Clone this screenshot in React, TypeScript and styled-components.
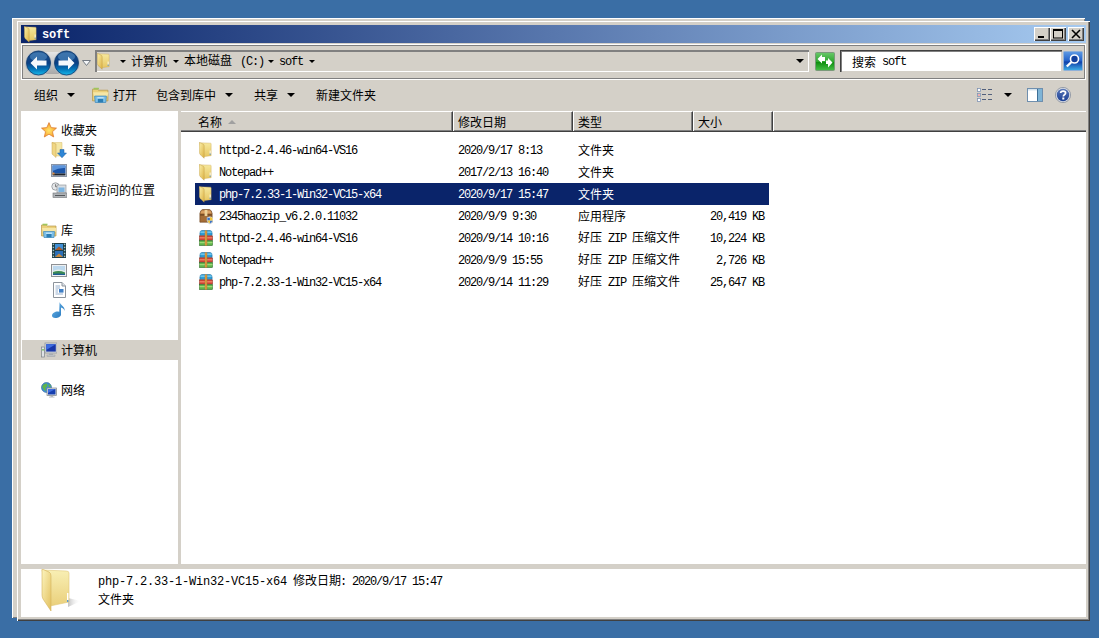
import React from "react";
import styled, { createGlobalStyle } from "styled-components";

const Global = createGlobalStyle`
  html, body { margin: 0; padding: 0; background: #3a6ea5; }
  body { font-family: "Noto Sans CJK SC", "Liberation Sans", sans-serif; font-size: 12px; color: #000; }
  * { box-sizing: border-box; }
`;

const Desktop = styled.div`position: relative; width: 1099px; height: 638px; overflow: hidden; background: #3a6ea5;`;
const BackWindow = styled.div`
  position: absolute; left: 12px; top: 18px; width: 1073px; height: 600px; background: #d4d0c8;
  box-shadow: inset 1px 1px 0 #fff, inset -1px -1px 0 #808080;
`;
const Window = styled.div`
  position: absolute; left: 17px; top: 21px; width: 1073px; height: 600px; padding: 4px;
  display: flex; flex-direction: column; background: #d4d0c8;
  box-shadow: inset 1px 1px 0 #fff, inset -1px -1px 0 #404040, inset -2px -2px 0 #808080;
`;
const Lat = styled.span`font-family: "Liberation Mono", monospace; font-size: 12px; letter-spacing: -1.2px; white-space: pre;`;
const StatusName = styled(Lat)`letter-spacing: -.2px; margin-right: -1px;`;
const StatusDate = styled(Lat)`margin-left: -1px;`;
const FileName = styled(Lat)`padding-top: 2px;`;

const TitleBar = styled.div`
  height: 18px; margin-bottom: 1px; flex: none; display: flex; align-items: center; padding: 0 3px;
  background: linear-gradient(90deg, #0a246a, #a6caf0);
`;
const TitleText = styled.span`
  margin-left: 4px; padding-top: 1px; color: #fff; font-family: "Liberation Mono", monospace; font-weight: 700; font-size: 12px; letter-spacing: -.2px;
`;
const CaptionGroup = styled.div`margin-left: auto; margin-right: -1px; display: flex; align-items: center;`;
const CaptionButton = styled.div<{ $gap?: number }>`
  width: 16px; height: 14px; margin-left: ${p => p.$gap ?? 0}px; background: #d4d0c8; display: flex; align-items: center; justify-content: center;
  box-shadow: inset 1px 1px 0 #fff, inset -1px -1px 0 #404040, inset -2px -2px 0 #808080;
`;

const NavBar = styled.div`
  height: 36px; flex: none; display: flex; align-items: center; padding: 0 2px 2px 3px; 
  box-shadow: inset 1px 1px 0 #fff, inset -1px -1px 0 #fff, inset -2px -2px 0 #808080, inset 2px 2px 0 #808080;
`;
const NavButtons = styled.svg`flex: none; margin-top: 4px;`;
const AddressBox = styled.div`
  width: 714px; height: 22px; flex: none; display: flex; align-items: center; padding-left: 2px; padding-right: 5px;
  box-shadow: inset 1px 1px 0 #808080, inset 2px 2px 0 #808080, inset -1px -1px 0 #fff;
`;
const SmallCaret = styled.i<{ $left?: number }>`
  display: block; flex: none; margin-left: ${p => p.$left ?? 0}px; width: 0; height: 0;
  border-left: 3px solid transparent; border-right: 3px solid transparent; border-top: 3px solid #000;
`;
const Crumb = styled.span`margin-left: 5px; white-space: nowrap; line-height: 20px;`;
const Drive = styled(Lat)`margin: 0 -2px 0 8px;`;
const AddressDrop = styled(SmallCaret)`
  margin-left: auto; border-left-width: 4px; border-right-width: 4px; border-top-width: 4px;
`;
const GreenButton = styled.svg`flex: none; margin-left: 6px;`;
const SearchBox = styled.div`
  width: 222px; height: 22px; margin-left: 5px; flex: none; background: #fff; padding: 1px 0 0 12px; display: flex; align-items: center; gap: 6px; line-height: 20px;
  box-shadow: inset 1px 1px 0 #404040, inset 2px 2px 0 #808080, inset -1px -1px 0 #d4d0c8;
`;
const SearchButton = styled.svg`flex: none; margin-left: 1px;`;

const Toolbar = styled.div`height: 31px; flex: none; display: flex; align-items: center; padding: 0 15px 1px 13px;`;
const ToolItem = styled.div<{ $left?: number }>`
  display: flex; align-items: center; gap: 9px; margin-left: ${p => p.$left ?? 0}px; white-space: nowrap; line-height: 18px;
`;
const OpenLabel = styled.span`margin-left: -5px;`;
const ToolCaret = styled.i`
  display: block; flex: none; width: 0; height: 0;
  border-left: 4px solid transparent; border-right: 4px solid transparent; border-top: 4px solid #000;
`;
const ToolRight = styled.div`margin-left: auto; display: flex; align-items: center; gap: 12px;`;
const PaneGap = styled.span`display: flex; margin: 0 0 0 3px;`;

const Body = styled.div`height: 453px; flex: none; display: flex;`;
const Sidebar = styled.nav`width: 157px; flex: none; background: #fff; padding: 9px 0 0 1px;`;
const SideRow = styled.div<{ $child?: boolean; $active?: boolean; $after?: boolean }>`
  height: 20px; display: flex; align-items: center; white-space: nowrap; line-height: 20px;
  padding-left: ${p => (p.$child ? 29 : 19)}px; gap: 4px;
  margin-bottom: ${p => (p.$after ? 20 : 0)}px;
  background: ${p => (p.$active ? "#d4d0c8" : "transparent")};
`;
const SideIcon = styled.span`width: 16px; height: 16px; flex: none; display: flex; align-items: center; justify-content: center;`;
const VSplit = styled.div`width: 3px; flex: none;`;
const Main = styled.main`flex: 1; background: #fff; min-width: 0;`;
const Header = styled.div`height: 21px; display: flex; background: #d4d0c8; box-shadow: inset 0 1px 0 #fff, inset 0 -1px 0 #404040, inset 0 -2px 0 #808080;`;
const HeaderCell = styled.div<{ $w?: number; $pad: number }>`
  ${p => (p.$w ? `width: ${p.$w}px; flex: none; border-right: 1px solid #404040; box-shadow: inset -1px 0 0 #808080, 1px 0 0 #fff;` : "flex: 1;")}
  padding-left: ${p => p.$pad}px; display: flex; align-items: center; gap: 6px; margin-bottom: 1px; border-top: 1px solid #fff; line-height: 18px;
`;
const SortArrow = styled.i`
  display: block; width: 0; height: 0; border-left: 4px solid transparent; border-right: 4px solid transparent; border-bottom: 4px solid #a0a0a0;
`;
const List = styled.div`padding: 7px 0 0 14px;`;
const Row = styled.div<{ $selected?: boolean }>`
  width: 574px; height: 22px; padding-bottom: 2px; display: grid; grid-template-columns: 259px 120px 120px 75px; align-items: center; line-height: 20px; white-space: nowrap;
  background: ${p => (p.$selected ? "#0a246a" : "transparent")}; color: ${p => (p.$selected ? "#fff" : "#000")};
`;
const NameCell = styled.div`display: flex; align-items: center; gap: 6px; padding-left: 4px;`;
const RowIcon = styled.span`width: 14px; height: 17px; flex: none; display: flex; align-items: center; justify-content: center;`;
const TextCell = styled.div`padding-left: 4px;`;
const SizeCell = styled.div`padding-right: 5px; text-align: right;`;

const HSplit = styled.div`height: 5px; flex: none;`;
const StatusBar = styled.footer`height: 48px; flex: none; background: #fff; display: flex; padding-left: 20px;`;
const StatusIcon = styled.svg`flex: none; margin-right: 17px;`;
const StatusText = styled.div`padding-top: 1px; line-height: 19px; white-space: nowrap;`;
const StatusLine = styled.div`height: 19px;`;

const Folder = ({ w = 14, h = 17 }: { w?: number; h?: number }) => (
  <svg width={w} height={h} viewBox="0 0 38 44">
    <defs>
      <linearGradient id="fb" x1="0" y1="0" x2="0" y2="1"><stop offset="0" stopColor="#f6e89e" /><stop offset="1" stopColor="#e7c762" /></linearGradient>
      <linearGradient id="ff" x1="0" y1="0" x2="1" y2="1"><stop offset="0" stopColor="#fbefa8" /><stop offset="1" stopColor="#dcb244" /></linearGradient>
    </defs>
    <path d="M1 1 L31 2 Q33 2 33 4 V36 L11 39 L1 1Z" fill="url(#fb)" stroke="#caa54d" strokeWidth="1" />
    <path d="M1 0 L12 5 Q14 7 14 9 V43 L3 33 Q1 30 1 27Z" fill="url(#ff)" stroke="#b8923c" strokeWidth="1" />
    <rect x="29" y="22" width="2.4" height="9" fill="#fff" />
    <rect x="29" y="30" width="2.4" height="4" fill="#4a90d5" />
  </svg>
);

const Zip = () => (
  <svg width="16" height="16" viewBox="0 0 15 15" preserveAspectRatio="none">
    <path d="M1 3 Q1 0.5 3 0.5 H12 Q14 .5 14 3 V5 H1Z" fill="#2f9fd8" stroke="#1c6c9e" strokeWidth=".6" />
    <rect x="0.5" y="5.5" width="14" height="4" fill="#d94a3a" stroke="#7d2e22" strokeWidth=".6" />
    <rect x="0.5" y="10" width="14" height="4.5" fill="#5fb54a" stroke="#2f6b2a" strokeWidth=".6" />
    <rect x="0.5" y="6.8" width="14" height="1" fill="#f08a70" />
    <rect x="0.5" y="11.4" width="14" height="1" fill="#a8df80" />
    <rect x="1.5" y="1.5" width="12" height="1" fill="#8fd6f4" />
    <rect x="6.2" y="0.5" width="2.6" height="14" fill="#b5752a" />
    <rect x="6.9" y="0.5" width="1.1" height="14" fill="#eeb54e" />
  </svg>
);

const Installer = () => (
  <svg width="16" height="17" viewBox="0 0 16 17">
    <path d="M2 2 L4 .5 H12 L14 2 L15 5 V15 H1 V5Z" fill="#a46c36" stroke="#6b4320" strokeWidth=".7" />
    <path d="M1.5 5 L3 1.5 H13 L14.5 5Z" fill="#d9a062" />
    <rect x="1.2" y="5.6" width="13.6" height="2" fill="#7a4d24" />
    <rect x="6.4" y="1" width="3.2" height="7" fill="#eed29a" />
    <path d="M9 9.5 L12.5 8.5 L16 9.5 V13 Q15.5 16 12.5 17 Q9.5 16 9 13Z" fill="#f4f4f4" stroke="#7a8aa0" strokeWidth=".4" />
    <path d="M9.6 10 H12.5 V13 H9.6Z M12.5 13 H15.4 Q15 15.4 12.5 16.4Z" fill="#3b74c8" />
    <path d="M12.5 9.2 L15.4 10 V13 H12.5Z M12.5 13 V16.4 Q10 15.4 9.6 13Z" fill="#f2c53a" />
  </svg>
);

const Star = () => (
  <svg width="16" height="16" viewBox="0 0 16 16">
    <defs><radialGradient id="st" cx=".5" cy=".55" r=".55"><stop offset="0" stopColor="#ffe66a" /><stop offset=".7" stopColor="#fbb03b" /><stop offset="1" stopColor="#ee7d1a" /></radialGradient></defs>
    <path d="M8 .6 L10.2 5.6 L15.5 6.1 L11.5 9.7 L12.7 15 L8 12.2 L3.3 15 L4.5 9.7 L.5 6.1 L5.8 5.6Z" fill="url(#st)" stroke="#d9772c" strokeWidth=".7" />
  </svg>
);

const DownloadIcon = () => (
  <svg width="16" height="16" viewBox="0 0 16 16">
    <path d="M1 .5 H11 V14 H5 Z" fill="#f4e6a4" stroke="#d8bd6c" strokeWidth=".5" />
    <path d="M1 .5 L5 2 V15.5 L1 12Z" fill="#f0d684" stroke="#c8a550" strokeWidth=".5" />
    <path d="M9 7.5 H13 V11 H15.5 L11 15.8 L6.5 11 H9Z" fill="#2f86d6" stroke="#1c5c9e" strokeWidth=".5" />
  </svg>
);

const DesktopIcon = () => (
  <svg width="16" height="13" viewBox="0 0 16 13">
    <rect x=".5" y=".5" width="15" height="12" fill="#e6eaf0" stroke="#8a94a4" />
    <rect x="1.5" y="1.5" width="13" height="8" fill="#1c55a8" />
    <path d="M1.5 1.5 H14.5 V4 Q8 3.5 1.5 7Z" fill="#5d95dc" />
    <rect x="1.5" y="9.5" width="13" height="2" fill="#20242c" />
    <rect x="1.5" y="8.5" width="2" height="2" fill="#e08a3c" />
  </svg>
);

const RecentIcon = () => (
  <svg width="16" height="16" viewBox="0 0 16 16">
    <circle cx="4.5" cy="4.5" r="3.7" fill="#e4e6e8" stroke="#8b9096" strokeWidth=".8" />
    <path d="M4.5 2.2 V4.7 H6.6" stroke="#555" strokeWidth=".7" fill="none" />
    <rect x="6" y="3" width="9" height="8" fill="#d8dde2" stroke="#868b90" strokeWidth=".6" />
    <rect x="7.5" y="5.5" width="6" height="4.5" fill="#7db5e2" />
    <rect x="2" y="11" width="14" height="4.5" fill="#b0b4b8" stroke="#6e7276" strokeWidth=".6" />
    <rect x="4" y="13" width="10" height="1" fill="#54585c" />
  </svg>
);

const LibraryIcon = ({ w = 16, h = 15 }: { w?: number; h?: number }) => (
  <svg width={w} height={h} viewBox="0 0 16 15">
    <path d="M.5 2 H5 L6.2 3 H15 V13 H.5Z" fill="#ecd07a" stroke="#b7984a" strokeWidth=".7" />
    <rect x="1.5" y=".7" width="5" height="1.6" fill="#9fc55c" />
    <path d="M1 5 H15.5 L14.5 9 H2Z" fill="#f6e6a6" />
    <path d="M2.5 8.5 H13.5 L13 14.5 H3Z" fill="#7ec1ea" stroke="#3d86b8" strokeWidth=".7" />
    <rect x="5.5" y="11" width="5" height="3.4" fill="#2b7db4" />
    <rect x="5" y="9.7" width="6" height="1" fill="#d8f0ff" />
  </svg>
);

const VideoIcon = () => (
  <svg width="14" height="15" viewBox="0 0 14 15">
    <rect width="14" height="15" fill="#1f3d45" />
    {[1, 4, 7, 10, 13].map(y => (
      <React.Fragment key={y}>
        <rect x=".7" y={y - .3} width="1.4" height="1.4" fill="#9fc4c8" />
        <rect x="11.9" y={y - .3} width="1.4" height="1.4" fill="#9fc4c8" />
      </React.Fragment>
    ))}
    <rect x="3" y="1" width="8" height="6" fill="#3f8fd6" />
    <rect x="3" y="8" width="8" height="6" fill="#2a6fb8" />
    <path d="M3 7 L7 3.5 L11 7Z" fill="#a85a2a" />
    <path d="M3 14 L7 10.5 L11 14Z" fill="#c6883a" />
  </svg>
);

const PictureIcon = () => (
  <svg width="16" height="13" viewBox="0 0 16 13">
    <rect x=".5" y=".5" width="15" height="12" fill="#eef0f2" stroke="#8d9094" />
    <rect x="2" y="2" width="12" height="9" fill="#bcd8ee" />
    <path d="M2 7 Q7 4 14 7 V8.5 H2Z" fill="#e4efe8" />
    <path d="M2 8 Q8 6 14 8.5 V11 H2Z" fill="#3c8a54" />
    <path d="M2 9.8 Q8 9 14 10 V11 H2Z" fill="#1f5d96" />
  </svg>
);

const DocIcon = () => (
  <svg width="13" height="16" viewBox="0 0 13 16">
    <path d="M.5 .5 H9 L12.5 4 V15.5 H.5Z" fill="#fff" stroke="#8d949c" />
    <path d="M9 .5 V4 H12.5" fill="#dde2e8" stroke="#8d949c" />
    <path d="M2.5 4 H7 M2.5 6 H7 M2.5 8 H5 M2.5 10 H5 M2.5 12 H10" stroke="#7f9cc0" strokeWidth=".8" />
    <rect x="6" y="7" width="4.5" height="3.6" fill="#3f7fc6" />
  </svg>
);

const MusicIcon = () => (
  <svg width="14" height="16" viewBox="0 0 14 16">
    <defs><linearGradient id="mu" x1="0" y1="0" x2="1" y2="1"><stop offset="0" stopColor="#6fbbec" /><stop offset="1" stopColor="#1f6fb8" /></linearGradient></defs>
    <path d="M7.6 0 C8 3 13.5 4.5 12.5 9 C12 6.8 10.5 6 9 5.5 V12.5 C9 14.8 6 16 3.5 16 C1 16 0 14.8 0 13.5 C0 11.5 3 9.6 5.6 9.6 C6.2 9.6 6.8 9.7 7.2 10Z" fill="url(#mu)" />
  </svg>
);

const ComputerIcon = () => (
  <svg width="16" height="16" viewBox="0 0 16 16">
    <rect x=".5" y="5" width="3" height="10" fill="#dfe2e6" stroke="#7c8288" strokeWidth=".7" />
    <rect x="1.2" y="7" width="1.6" height="1.6" fill="#6fbf5a" />
    <rect x="4" y="1" width="12" height="10" fill="#d8dce0" stroke="#8b9096" strokeWidth=".7" />
    <rect x="5.2" y="2.2" width="9.6" height="7.4" fill="#1836a8" />
    <path d="M5.2 2.2 H14.8 L5.2 8Z" fill="#3f6de0" />
    <rect x="8" y="11" width="4" height="2" fill="#b0b4b8" />
    <rect x="6" y="13" width="8" height="1.6" fill="#c8ccd0" stroke="#8b9096" strokeWidth=".4" />
  </svg>
);

const NetworkIcon = () => (
  <svg width="16" height="16" viewBox="0 0 16 16">
    <circle cx="5.5" cy="5.5" r="5" fill="#3f8fd6" stroke="#2a5f96" strokeWidth=".6" />
    <path d="M2 3 Q4 1 6 1.5 L6.5 4 L4.5 6 L5 9 L3 8 L1.2 5Z" fill="#5fb54a" />
    <path d="M7.5 2 L10 3.5 L9 5.5 L7.5 4.5Z" fill="#5fb54a" />
    <rect x="6" y="6" width="9.5" height="7.5" fill="#dfe2e6" stroke="#7c8288" strokeWidth=".7" />
    <rect x="7" y="7" width="7.5" height="5.5" fill="#173fb0" />
    <path d="M7 7 H14.5 L7 11Z" fill="#3f6de0" />
    <rect x="9.5" y="13.5" width="2.5" height="1.3" fill="#9da2a8" />
    <rect x="8" y="14.6" width="5.5" height="1" fill="#c0c4c8" />
  </svg>
);

const Back = ({ cx, flip }: { cx: number; flip?: boolean }) => (
  <g>
    <circle cx={cx} cy="16" r="13" fill="#b8bec6" />
    <circle cx={cx} cy="16" r="12" fill="url(#nb)" stroke="#123c6c" strokeWidth=".8" />
    <ellipse cx={cx} cy="9.8" rx="8.6" ry="4.6" fill="#6aa6d8" opacity=".45" />
    <path
      transform={flip ? `translate(${cx * 2} 0) scale(-1 1)` : undefined}
      d={`M${cx - 8} 16 L${cx - 1.5} 9.6 V13.6 H${cx + 8} V18.4 H${cx - 1.5} V22.4Z`}
      fill="#f4f8fc"
    />
  </g>
);

const NavArrows = () => (
  <NavButtons width="71" height="32" viewBox="0 0 71 32">
    <defs>
      <linearGradient id="nb" x1="0" y1="0" x2="0" y2="1">
        <stop offset="0" stopColor="#1b4f8c" /><stop offset=".5" stopColor="#0a3f84" /><stop offset=".75" stopColor="#0273b8" /><stop offset="1" stopColor="#19b8ea" />
      </linearGradient>
      <linearGradient id="cap" x1="0" y1="0" x2="0" y2="1">
        <stop offset="0" stopColor="#e6e6e6" /><stop offset="1" stopColor="#a8a8a8" />
      </linearGradient>
    </defs>
    <rect x="1" y="5" width="55" height="22" rx="11" fill="url(#cap)" />
    <Back cx={14.5} />
    <Back cx={42.5} flip />
    <path d="M58.5 13.5 H66.5 L62.5 18.5Z" fill="#f4f6f8" stroke="#747b84" strokeWidth="1" />
  </NavButtons>
);

const ViewIcon = () => (
  <svg width="15" height="14" viewBox="0 0 15 14">
    {[1, 6, 11].map((y, i) => (
      <React.Fragment key={y}>
        <rect x=".5" y={y - .5} width="3" height="3" fill="#fff" stroke="#7f93b4" strokeWidth=".8" />
        {i === 1 && <rect x="1.4" y={y + .4} width="1.2" height="1.2" fill="#d42828" />}
        <path d={`M5 ${y + .5} H9 M11 ${y + .5} H15`} stroke="#52607c" strokeWidth="1" />
      </React.Fragment>
    ))}
  </svg>
);

const PaneIcon = () => (
  <svg width="16" height="14" viewBox="0 0 16 14">
    <rect x=".5" y=".5" width="15" height="13" fill="#fff" stroke="#6f8fae" />
    <rect x="10" y="1" width="5" height="12" fill="#7eb4d6" />
    <rect x="10" y="1" width="1" height="12" fill="#3d6f96" />
    <rect x="1" y="1" width="9" height="1.5" fill="#d6e4ee" />
  </svg>
);

const HelpIcon = () => (
  <svg width="16" height="16" viewBox="0 0 16 16">
    <defs><linearGradient id="hp" x1="0" y1="0" x2="0" y2="1"><stop offset="0" stopColor="#5a78b8" /><stop offset="1" stopColor="#1b3f94" /></linearGradient></defs>
    <circle cx="8" cy="8" r="7.6" fill="#d8dce4" stroke="#7c8696" strokeWidth=".7" />
    <circle cx="8" cy="8" r="6.2" fill="url(#hp)" />
    <path d="M5.6 6 C5.8 3.4 10.6 3.4 10.6 6 C10.6 7.8 8.3 7.6 8.3 9.4" fill="none" stroke="#fff" strokeWidth="1.7" />
    <rect x="7.3" y="10.5" width="2" height="2" fill="#fff" />
  </svg>
);

const Refresh = () => (
  <GreenButton width="20" height="19" viewBox="0 0 20 19">
    <defs><linearGradient id="gr" x1="0" y1="0" x2="0" y2="1"><stop offset="0" stopColor="#6ac86a" /><stop offset=".5" stopColor="#2fa82f" /><stop offset=".55" stopColor="#0f8f0f" /><stop offset="1" stopColor="#48c048" /></linearGradient></defs>
    <rect x=".5" y=".5" width="19" height="18" rx="1" fill="url(#gr)" stroke="#7a9a7a" />
    <path d="M2.5 7 L7 2.5 V5 H10 V9 H7 V11.5Z" fill="#fff" />
    <path d="M17.5 9.5 L13 5 V7.5 H11 V11 H13 V14.5Z" fill="#fff" transform="translate(0 1)" />
  </GreenButton>
);

const SearchGo = () => (
  <SearchButton width="20" height="20" viewBox="0 0 20 20">
    <defs><linearGradient id="sg" x1="0" y1="0" x2="0" y2="1"><stop offset="0" stopColor="#5f9be4" /><stop offset=".5" stopColor="#1f5fc8" /><stop offset=".55" stopColor="#0f3fa8" /><stop offset="1" stopColor="#3fb0e8" /></linearGradient></defs>
    <rect x=".5" y=".5" width="19" height="19" rx="1" fill="url(#sg)" stroke="#8fb0d8" />
    <circle cx="11.5" cy="8" r="4" fill="#123f9c" stroke="#fff" strokeWidth="1.6" />
    <path d="M8.5 11 L3.8 15.5" stroke="#fff" strokeWidth="2.4" />
  </SearchButton>
);

const StatusFolder = () => (
  <StatusIcon width="40" height="43" viewBox="0 0 40 43">
    <defs>
      <linearGradient id="sb" x1="0" y1="0" x2="0" y2="1"><stop offset="0" stopColor="#f8efb4" /><stop offset="1" stopColor="#ead07c" /></linearGradient>
      <linearGradient id="sf" x1="0" y1="0" x2="1" y2="1"><stop offset="0" stopColor="#fcf4be" /><stop offset="1" stopColor="#e2c05e" /></linearGradient>
      <linearGradient id="ss" x1="0" y1="0" x2="1" y2="0"><stop offset="0" stopColor="#9a9a9a" stopOpacity=".6" /><stop offset="1" stopColor="#fff" stopOpacity="0" /></linearGradient>
    </defs>
    <path d="M27 29 L40 32 L27 38Z" fill="url(#ss)" />
    <path d="M1 1 L25 2 Q28 2 28 4 V33 L9 37Z" fill="url(#sb)" stroke="#e0c878" strokeWidth=".6" />
    <path d="M1 0 L8 3 Q10 4 10 7 V42 L2 30 Q1 28 1 26Z" fill="url(#sf)" stroke="#d3b25a" strokeWidth=".6" />
    <rect x="26" y="24" width="1.4" height="7" fill="#fff" />
    <rect x="26" y="31" width="1.4" height="2" fill="#5b9bd5" />
  </StatusIcon>
);

type FileRow = { name: string; date: string; type: React.ReactNode; size?: string; icon: "folder" | "zip" | "exe"; selected?: boolean };
const zipType = <>好压<Lat> ZIP </Lat>压缩文件</>;
const files: FileRow[] = [
  { name: "httpd-2.4.46-win64-VS16", date: "2020/9/17 8:13", type: "文件夹", icon: "folder" },
  { name: "Notepad++", date: "2017/2/13 16:40", type: "文件夹", icon: "folder" },
  { name: "php-7.2.33-1-Win32-VC15-x64", date: "2020/9/17 15:47", type: "文件夹", icon: "folder", selected: true },
  { name: "2345haozip_v6.2.0.11032", date: "2020/9/9 9:30", type: "应用程序", size: "20,419 KB", icon: "exe" },
  { name: "httpd-2.4.46-win64-VS16", date: "2020/9/14 10:16", type: zipType, size: "10,224 KB", icon: "zip" },
  { name: "Notepad++", date: "2020/9/9 15:55", type: zipType, size: "2,726 KB", icon: "zip" },
  { name: "php-7.2.33-1-Win32-VC15-x64", date: "2020/9/14 11:29", type: zipType, size: "25,647 KB", icon: "zip" },
];

const fileIcon = (k: FileRow["icon"]) => (k === "folder" ? <Folder /> : k === "zip" ? <Zip /> : <Installer />);

export default function App() {
  return (
    <Desktop>
      <Global />
      <BackWindow />
      <Window>
        <TitleBar>
          <Folder w={14} h={17} />
          <TitleText>soft</TitleText>
          <CaptionGroup>
            <CaptionButton>
              <svg width="10" height="10" viewBox="0 0 10 10"><rect x="1" y="7" width="6" height="2" fill="#000" /></svg>
            </CaptionButton>
            <CaptionButton>
              <svg width="10" height="10" viewBox="0 0 10 10"><rect x=".5" y=".5" width="9" height="8.5" fill="none" stroke="#000" /><rect x="0" y="0" width="10" height="2" fill="#000" /></svg>
            </CaptionButton>
            <CaptionButton $gap={2}>
              <svg width="10" height="10" viewBox="0 0 10 10"><path d="M1 1 L9 9 M9 1 L1 9" stroke="#000" strokeWidth="1.6" /></svg>
            </CaptionButton>
          </CaptionGroup>
        </TitleBar>
        <NavBar>
          <NavArrows />
          <AddressBox>
            <Folder w={14} h={17} />
            <SmallCaret $left={9} />
            <Crumb>计算机</Crumb>
            <SmallCaret $left={6} />
            <Crumb>本地磁盘<Drive>(C:)</Drive></Crumb>
            <SmallCaret $left={6} />
            <Crumb><Lat>soft</Lat></Crumb>
            <SmallCaret $left={6} />
            <AddressDrop />
          </AddressBox>
          <Refresh />
          <SearchBox>
            <span>搜索</span>
            <Lat>soft</Lat>
          </SearchBox>
          <SearchGo />
        </NavBar>
        <Toolbar>
          <ToolItem>组织<ToolCaret /></ToolItem>
          <ToolItem $left={17}><LibraryIcon w={17} h={16} /><OpenLabel>打开</OpenLabel></ToolItem>
          <ToolItem $left={19}>包含到库中<ToolCaret /></ToolItem>
          <ToolItem $left={21}>共享<ToolCaret /></ToolItem>
          <ToolItem $left={21}>新建文件夹</ToolItem>
          <ToolRight>
            <ViewIcon />
            <ToolCaret />
            <PaneGap><PaneIcon /></PaneGap>
            <HelpIcon />
          </ToolRight>
        </Toolbar>
        <Body>
          <Sidebar>
            <SideRow><SideIcon><Star /></SideIcon>收藏夹</SideRow>
            <SideRow $child><SideIcon><DownloadIcon /></SideIcon>下载</SideRow>
            <SideRow $child><SideIcon><DesktopIcon /></SideIcon>桌面</SideRow>
            <SideRow $child $after><SideIcon><RecentIcon /></SideIcon>最近访问的位置</SideRow>
            <SideRow><SideIcon><LibraryIcon /></SideIcon>库</SideRow>
            <SideRow $child><SideIcon><VideoIcon /></SideIcon>视频</SideRow>
            <SideRow $child><SideIcon><PictureIcon /></SideIcon>图片</SideRow>
            <SideRow $child><SideIcon><DocIcon /></SideIcon>文档</SideRow>
            <SideRow $child $after><SideIcon><MusicIcon /></SideIcon>音乐</SideRow>
            <SideRow $active $after><SideIcon><ComputerIcon /></SideIcon>计算机</SideRow>
            <SideRow><SideIcon><NetworkIcon /></SideIcon>网络</SideRow>
          </Sidebar>
          <VSplit />
          <Main>
            <Header>
              <HeaderCell $w={272} $pad={17}>名称<SortArrow /></HeaderCell>
              <HeaderCell $w={120} $pad={5}>修改日期</HeaderCell>
              <HeaderCell $w={120} $pad={5}>类型</HeaderCell>
              <HeaderCell $w={80} $pad={5}>大小</HeaderCell>
              <HeaderCell $pad={0} />
            </Header>
            <List>
              {files.map((f, i) => (
                <Row key={i} $selected={f.selected}>
                  <NameCell><RowIcon>{fileIcon(f.icon)}</RowIcon><FileName>{f.name}</FileName></NameCell>
                  <TextCell><Lat>{f.date}</Lat></TextCell>
                  <TextCell>{f.type}</TextCell>
                  <SizeCell><Lat>{f.size}</Lat></SizeCell>
                </Row>
              ))}
            </List>
          </Main>
        </Body>
        <HSplit />
        <StatusBar>
          <StatusFolder />
          <StatusText>
            <StatusLine><StatusName>php-7.2.33-1-Win32-VC15-x64 </StatusName>修改日期<StatusDate>: 2020/9/17 15:47</StatusDate></StatusLine>
            <StatusLine>文件夹</StatusLine>
          </StatusText>
        </StatusBar>
      </Window>
    </Desktop>
  );
}
